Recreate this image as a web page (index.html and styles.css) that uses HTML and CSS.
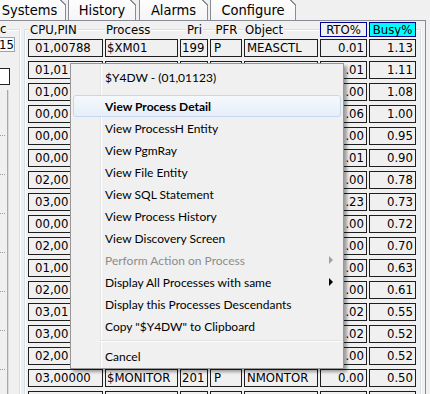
FILE: index.html
```html
<!DOCTYPE html>
<html>
<head>
<meta charset="utf-8">
<link rel="stylesheet" href="styles.css">
</head>
<body>
<div class="tabs">
  <div class="tab t1">Systems</div>
  <div class="tab t2">History</div>
  <div class="tab t3">Alarms</div>
  <div class="tab t4">Configure</div>
</div>
<div class="page">
  <div class="side">
    <div class="side-label">c</div>
    <div class="num-box">15</div>
    <div class="chk"></div>
    <div class="track">
      <div class="ticks"><i></i><i></i><i></i><i></i><i></i><i></i><i></i></div>
      <div class="track-line"></div>
    </div>
  </div>
  <div class="group">
    <div class="cols hdr">
      <div class="hc"><span>CPU,PIN</span></div>
      <div class="hc hp"><span>Process</span></div>
      <div class="hc hcen"><span>Pri</span></div>
      <div class="hc hcen"><span>PFR</span></div>
      <div class="hc hp"><span>Object</span></div>
      <div class="hb">RTO%</div>
      <div class="hb busy">Busy%</div>
    </div>
    <div class="cols rows">
      <div class="c cpu">01,00788</div><div class="c proc">$XM01</div><div class="c pri">199</div><div class="c pfr">P</div><div class="c obj">MEASCTL</div><div class="c num">0.01</div><div class="c num">1.13</div>
      <div class="c cpu">01,01</div><div class="c"></div><div class="c"></div><div class="c"></div><div class="c"></div><div class="c num">.01</div><div class="c num">1.11</div>
      <div class="c cpu">01,00</div><div class="c"></div><div class="c"></div><div class="c"></div><div class="c"></div><div class="c num">.00</div><div class="c num">1.08</div>
      <div class="c cpu">00,00</div><div class="c"></div><div class="c"></div><div class="c"></div><div class="c"></div><div class="c num">.06</div><div class="c num">1.00</div>
      <div class="c cpu">00,00</div><div class="c"></div><div class="c"></div><div class="c"></div><div class="c"></div><div class="c num">.00</div><div class="c num">0.95</div>
      <div class="c cpu">00,00</div><div class="c"></div><div class="c"></div><div class="c"></div><div class="c"></div><div class="c num">.01</div><div class="c num">0.90</div>
      <div class="c cpu">02,00</div><div class="c"></div><div class="c"></div><div class="c"></div><div class="c"></div><div class="c num">.00</div><div class="c num">0.78</div>
      <div class="c cpu">03,00</div><div class="c"></div><div class="c"></div><div class="c"></div><div class="c"></div><div class="c num">.23</div><div class="c num">0.73</div>
      <div class="c cpu">00,00</div><div class="c"></div><div class="c"></div><div class="c"></div><div class="c"></div><div class="c num">.00</div><div class="c num">0.72</div>
      <div class="c cpu">02,00</div><div class="c"></div><div class="c"></div><div class="c"></div><div class="c"></div><div class="c num">.00</div><div class="c num">0.70</div>
      <div class="c cpu">01,00</div><div class="c"></div><div class="c"></div><div class="c"></div><div class="c"></div><div class="c num">.00</div><div class="c num">0.63</div>
      <div class="c cpu">02,00</div><div class="c"></div><div class="c"></div><div class="c"></div><div class="c"></div><div class="c num">.00</div><div class="c num">0.61</div>
      <div class="c cpu">03,01</div><div class="c"></div><div class="c"></div><div class="c"></div><div class="c"></div><div class="c num">.02</div><div class="c num">0.55</div>
      <div class="c cpu">03,00</div><div class="c"></div><div class="c"></div><div class="c"></div><div class="c"></div><div class="c num">.02</div><div class="c num">0.52</div>
      <div class="c cpu">02,00</div><div class="c"></div><div class="c"></div><div class="c"></div><div class="c"></div><div class="c num">.00</div><div class="c num">0.52</div>
      <div class="c cpu">03,00000</div><div class="c proc">$MONITOR</div><div class="c pri">201</div><div class="c pfr">P</div><div class="c obj">NMONTOR</div><div class="c num">0.00</div><div class="c num">0.50</div>
      <div class="c"></div><div class="c"></div><div class="c"></div><div class="c"></div><div class="c"></div><div class="c"></div><div class="c"></div>
    </div>
  </div>
</div>

<div class="menu">
  <div class="mi">$Y4DW - (01,01123)</div>
  <div class="mspace"></div>
  <div class="mi hot"><b>View Process Detail</b></div>
  <div class="mi">View ProcessH Entity</div>
  <div class="mi">View PgmRay</div>
  <div class="mi">View File Entity</div>
  <div class="mi">View SQL Statement</div>
  <div class="mi">View Process History</div>
  <div class="mi">View Discovery Screen</div>
  <div class="mi dis">Perform Action on Process<span class="arr"></span></div>
  <div class="mi">Display All Processes with same<span class="arr"></span></div>
  <div class="mi">Display this Processes Descendants</div>
  <div class="mi">Copy "$Y4DW" to Clipboard</div>
  <div class="msep"></div>
  <div class="mi">Cancel</div>
</div>
</body>
</html>
```
FILE: styles.css
```css
* { box-sizing: border-box; }
html, body { margin: 0; padding: 0; }
body {
  width: 430px;
  height: 394px;
  overflow: hidden;
  position: relative;
  background: #f0f0f0;
  color: #000;
  font-family: "DejaVu Sans Condensed", "Liberation Sans", sans-serif;
  font-size: 13px;
}

/* tabs */
.tabs {
  display: flex;
  margin-left: -7px;
  margin-top: -1px;
  height: 21px;
}
.tab {
  position: relative;
  height: 21px;
  border: 1px solid #898c95;
  border-bottom: none;
  background: linear-gradient(#fdfdfd, #f5f5f5);
  font-size: 14.5px;
  line-height: 20px;
  text-align: center;
  margin-right: 2px;
}
.tab::after {
  content: "";
  position: absolute;
  top: -1px;
  right: -1px;
  width: 6px;
  height: 6px;
  background: linear-gradient(to bottom left, #f0f0f0 48%, #898c95 48%, #898c95 62%, transparent 62%);
}
.t1 { width: 73px; }
.t2 { width: 68px; margin-right: 3px; }
.t3 { width: 69px; }
.t4 { width: 86px; }

/* page */
.page {
  display: flex;
  width: 426px;
  height: 374px;
  border-top: 1px solid #898c95;
  border-right: 1px solid #898c95;
  padding-right: 4px;
}

.side {
  width: 20px;
  flex: none;
  margin-top: 8px;
  border-top: 1px solid #d5dfe5;
  border-right: 1px solid #d5dfe5;
  box-shadow: inset 0 1px 0 #fff, 1px 0 0 #fff;
  display: flex;
  flex-direction: column;
}
.side-label {
  align-self: flex-start;
  margin-top: -8px;
  height: 14px;
  line-height: 14px;
  padding-right: 1px;
  background: #f0f0f0;
}
.num-box {
  margin-top: 1px;
  margin-left: -2px;
  width: 17px;
  height: 15px;
  border: 1px solid #8fa7b7;
  background: #f7fbfe;
  text-align: right;
  line-height: 13px;
  padding-right: 1px;
}
.chk {
  margin-top: 16px;
  margin-left: -2px;
  width: 12px;
  height: 17px;
  border: 1px solid #222;
  background: #fff;
}
.track {
  margin-top: 5px;
  flex: 1;
  display: flex;
}
.ticks {
  width: 7px;
  display: flex;
  flex-direction: column;
  gap: 38px;
  padding-top: 45px;
}
.ticks i {
  display: block;
  width: 6px;
  height: 1px;
  background: repeating-linear-gradient(to right, #9a9a9a 0 1px, transparent 1px 2px);
}
.track-line {
  width: 2px;
  background: linear-gradient(to right, #a8a8a8 50%, #dcdcdc 50%);
}

/* group */
.group {
  flex: none;
  width: 397px;
  margin-left: 4px;
  margin-top: 8px;
  border: 1px solid #d5dfe5;
  border-bottom: none;
  box-shadow: inset 1px 1px 0 #fff, 1px 0 0 #fff;
  padding-left: 3px;
}
.cols {
  display: grid;
  grid-template-columns: 75px 73px 28px 32px 74px 47px 47px;
  column-gap: 2px;
}
.hdr {
  height: 15px;
  margin-top: -8px;
  margin-bottom: 2px;
  font-size: 13px;
}
.hc {
  display: flex;
  justify-content: flex-start;
  padding-left: 1px;
}
.hc span {
  background: #f0f0f0;
  line-height: 15px;
  padding: 0 1px;
}
.hp { padding-left: 0; }
.hcen { justify-content: center; }
.hb {
  border: 1px solid #000096;
  background: #f0f0f0;
  text-align: center;
  line-height: 13px;
}
.busy { background: #00ffff; }

.rows {
  grid-auto-rows: 18px;
  row-gap: 4px;
}
.c {
  border: 1px solid #1e1e1e;
  line-height: 16px;
  white-space: nowrap;
  overflow: hidden;
  padding: 0 2px;
}
.cpu { padding: 0 0 0 6px; }
.proc { padding-left: 1px; }
.pri { padding-left: 1px; }
.pfr { padding-left: 3px; }
.obj { padding-left: 2px; }
.num { text-align: right; padding-right: 2px; }

/* context menu */
.menu {
  position: absolute;
  left: 70px;
  top: 63px;
  width: 274px;
  padding: 2px 2px 1px 2px;
  border: 1px solid #979797;
  background: linear-gradient(to right, #f0f0f0 29px, #e2e3e3 29px, #e2e3e3 30px, #fff 30px, #fff 31px, #f0f0f0 31px);
  box-shadow: 3px 3px 3px rgba(0, 0, 0, 0.35);
  font-family: Lato, "Liberation Sans", sans-serif;
  font-size: 12px;
}
.mi {
  display: flex;
  align-items: center;
  height: 22px;
  padding-left: 32px;
  padding-right: 8px;
  white-space: nowrap;
}
.mi.hot {
  padding-left: 31px;
  border: 1px solid #c6d8ef;
  border-radius: 3px;
  background: linear-gradient(#f5f9fd, #e7eef8);
}
.mi.dis { color: #8d8d8d; }
.arr {
  margin-left: auto;
  width: 0;
  height: 0;
  border-left: 4px solid #000;
  border-top: 4px solid transparent;
  border-bottom: 4px solid transparent;
}
.dis .arr { border-left-color: #a0a0a0; }
.mspace { height: 7px; }
.msep {
  height: 8px;
  margin-left: 27px;
  padding-top: 3px;
}
.msep::before {
  content: "";
  display: block;
  height: 1px;
  background: #e0e0e0;
  box-shadow: 0 1px 0 #fff;
}
```
